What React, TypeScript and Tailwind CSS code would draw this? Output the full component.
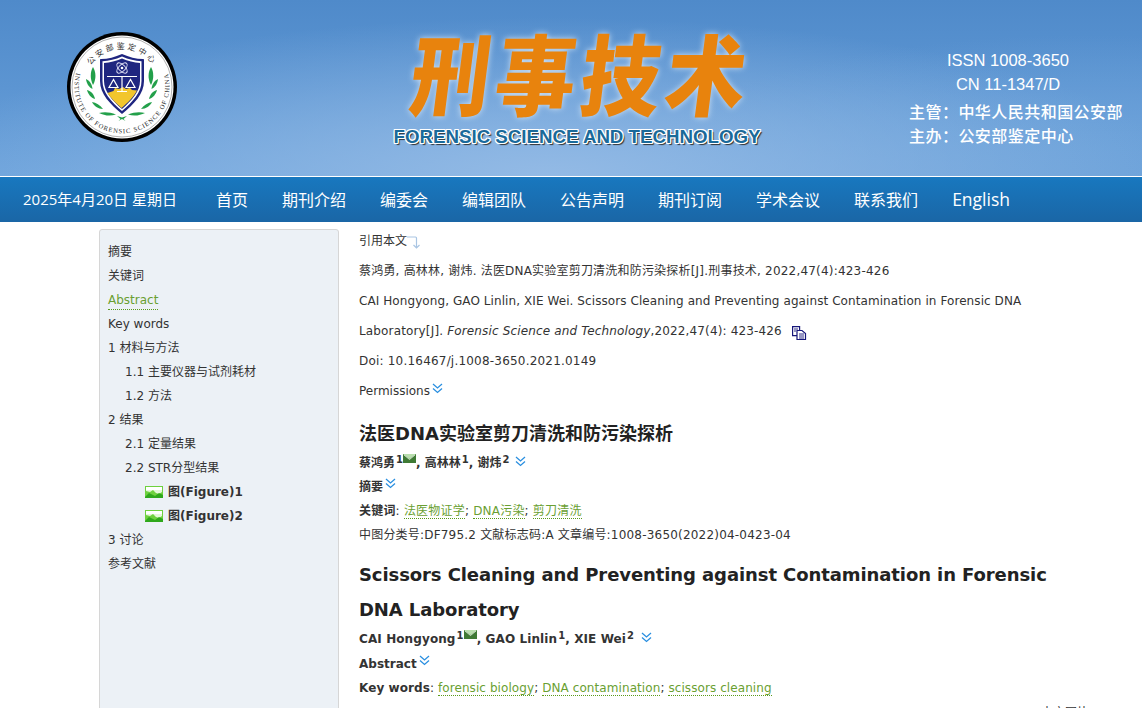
import { type ReactNode } from "react";

const body = "font-['DejaVu_Sans','Noto_Sans_CJK_SC',sans-serif]";
const nav = ["首页", "期刊介绍", "编委会", "编辑团队", "公告声明", "期刊订阅", "学术会议", "联系我们"];

const Logo = () => (
  <svg width="110" height="110" viewBox="0 0 110 110" className="shrink-0">
    <defs>
      <path id="topArc" d="M17 55a38 38 0 0 1 76 0" />
      <path id="botArc" d="M9 42A47.500 47.500 0 1 0 101 42" />
    </defs>
    <circle cx="55" cy="55" r="55" fill="#000" />
    <circle cx="55" cy="55" r="51.500" fill="#fff" />
    <circle cx="55" cy="55" r="50" fill="none" stroke="#666" strokeWidth="0.500" />
    <text fontSize="8" fill="#333" fontFamily="'Noto Sans CJK SC',sans-serif">
      <textPath href="#topArc" startOffset="50%" textAnchor="middle" letterSpacing="2.500">公安部鉴定中心</textPath>
    </text>
    <text fontSize="6.500" fill="#222" fontFamily="'Liberation Serif',serif">
      <textPath href="#botArc" startOffset="50%" textAnchor="middle" letterSpacing="1">INSTITUTE OF FORENSIC SCIENCE OF CHINA</textPath>
    </text>
    {/* shield */}
    <path d="M55 22c7 3 14 5 21 5 .6 0 1 .4 1 1v21c0 13-10 23-22 33-12-10-22-20-22-33V28c0-.6.4-1 1-1 7 0 14-2 21-5z" fill="#1f2680" />
    <path d="M55 24.500c6.500 2.800 13 4.500 19.500 4.700V49c0 11.500-8.500 20.500-19.500 30C44 69.500 35.500 60.500 35.500 49V29.200C42 29 48.500 27.300 55 24.500z" fill="#fff" />
    <path d="M55 26.500c6 2.600 12 4.200 18 4.500V49c0 10.500-8 19-18 28-10-9-18-17.500-18-28V31c6-.3 12-1.900 18-4.500z" fill="#1f2680" />
    <path d="M40.500 61l6-2 1.500-3 4 1 4-2 3 2 4-1 2 2 5 .5c-3 6-9 12-15.500 17.500-5-4.500-11-10-14.500-15.500z" fill="#f2c62d" />
    <g fill="none" stroke="#e0e0f5" strokeWidth="1">
      <ellipse cx="55" cy="36" rx="6.500" ry="3.200" transform="rotate(45 55 36)" />
      <ellipse cx="55" cy="36" rx="6.500" ry="3.200" transform="rotate(-45 55 36)" />
    </g>
    <circle cx="55" cy="36" r="1.300" fill="#fff" />
    <g fill="none" stroke="#fff" strokeWidth="1.200">
      <path d="M40 44.500h30M55 44.500V60M50 59.500h10" />
      <path d="M46.500 47.500l-4.500 8h9zM63.500 47.500l-4.500 8h9z" />
    </g>
    {/* wreath, left side drawn then mirrored */}
    <g fill="#23a04a">
      <g>
        <path d="M26 35c3 5 3.500 12 0 18-3-6-3-13 0-18z" />
        <path d="M19 47c3.500 1.500 6 5 6.500 10-3.500-1.500-6-5.500-6.500-10z" />
        <path d="M20 58c4 1 7 4 8 9-4-1-7-5-8-9z" />
        <path d="M25 70c4 .5 8 3 11 7-5 0-9-3-11-7z" />
        <path d="M32 81c5-1.500 11-1 17 1.500-6 2-12 1-17-1.500z" />
      </g>
      <g transform="translate(110 0) scale(-1 1)">
        <path d="M26 35c3 5 3.500 12 0 18-3-6-3-13 0-18z" />
        <path d="M19 47c3.500 1.500 6 5 6.500 10-3.500-1.500-6-5.500-6.500-10z" />
        <path d="M20 58c4 1 7 4 8 9-4-1-7-5-8-9z" />
        <path d="M25 70c4 .5 8 3 11 7-5 0-9-3-11-7z" />
        <path d="M32 81c5-1.500 11-1 17 1.500-6 2-12 1-17-1.500z" />
      </g>
      <path d="M50 84l5 1.500 5-1.500-3.500 3 2 2-3.500-2-3.500 2 2-2z" />
    </g>
  </svg>
);

const Chevrons = ({ className = "" }: { className?: string }) => (
  <svg width="11" height="11" viewBox="0 0 11 11" fill="none" stroke="#2a8fe0" strokeWidth="1.300" className={className}>
    <path d="M1 1l4.500 4 4.500-4M1 5.500l4.500 4 4.500-4" />
  </svg>
);

const Mail = () => (
  <svg width="13" height="9" viewBox="0 0 13 9" className="inline-block align-[4px]">
    <rect width="13" height="9" fill="#3f7a35" />
    <path d="M0 0l6.500 5L13 0z" fill="#b9dfae" />
    <path d="M1 1l5.500 4.500L12 1" fill="none" stroke="#fff" strokeWidth="0.700" />
  </svg>
);

const Pic = () => (
  <svg width="18" height="12" viewBox="0 0 18 12" className="shrink-0">
    <rect width="18" height="12" fill="#6ed13f" />
    <rect x="1" y="1" width="16" height="3" fill="#fff" />
    <path d="M1 4h16v2l-3 2-3-1-3-3-3 2-4-1z" fill="#e4f8d8" />
    <path d="M0 11l4-4 4 2 2 1 4-3 4 2v3H0z" fill="#2fa81c" />
  </svg>
);

const Link = ({ children }: { children: ReactNode }) => (
  <span className="text-[#6a9f32] border-b border-dotted border-[#5a9a1a]">{children}</span>
);

const Sup = ({ children }: { children: ReactNode }) => (
  <sup className="text-[10px] top-[-4px] ml-px">{children}</sup>
);

const Toc = ({ level = 0, children, bold }: { level?: number; children: ReactNode; bold?: boolean }) => (
  <div
    className={`h-6 flex items-center gap-[5px] ${level === 1 ? "pl-[17px]" : level === 2 ? "pl-[37px]" : ""} ${bold ? "font-bold" : ""}`}
  >
    {children}
  </div>
);

export default function App() {
  return (
    <div className={`h-[708px] overflow-hidden bg-white text-[12px] text-[#333] ${body}`}>
      <header className="h-[176px] flex items-center bg-[radial-gradient(ellipse_55%_90%_at_48%_100%,#93bae5,transparent),radial-gradient(ellipse_40%_80%_at_95%_100%,#6ea3da,transparent),linear-gradient(180deg,#4f8aca_0%,#5c95d2_50%,#6ea4dc_100%)]">
        <div className="ml-[67px] mt-[-2px]">
          <Logo />
        </div>
        <div className="ml-[215px] mt-[-1px] flex flex-col items-center w-[370px]">
          <div className="ml-[10px] font-['Noto_Sans_CJK_SC',sans-serif] font-black text-[#e8830d] text-[80px] leading-[88px] tracking-[5px] whitespace-nowrap skew-x-[-8deg] scale-y-110 [text-shadow:0_0_6px_#cfe2f5]">
            刑事技术
          </div>
          <div className="font-['Liberation_Sans',sans-serif] font-bold text-[18.700px] leading-6 mt-[11px] whitespace-nowrap text-[#1a6a9a] [text-shadow:-1px_-1px_0_#fff,1px_-1px_0_#fff,-1px_1px_0_#fff,1px_1px_0_#fff,0_-1px_0_#fff,0_1px_0_#fff,-1px_0_0_#fff,1px_0_0_#fff,2px_2px_1px_#333]">
            FORENSIC SCIENCE AND TECHNOLOGY
          </div>
        </div>
        <div className="ml-[147px] w-[198px] mt-[20px] text-white font-['Liberation_Sans','Noto_Sans_CJK_SC',sans-serif] text-[16.500px] leading-6">
          <div className="text-center">ISSN 1008-3650</div>
          <div className="text-center">CN 11-1347/D</div>
          <div className="mt-[5px] font-medium text-[16px] tracking-[0.460px] whitespace-nowrap">主管：中华人民共和国公安部</div>
          <div className="font-medium text-[16px] tracking-[0.460px] whitespace-nowrap">主办：公安部鉴定中心</div>
        </div>
      </header>
      <nav className="mt-px h-[45px] flex items-center bg-gradient-to-b from-[#1878bf] to-[#1a66a6] text-white pl-[23px] font-['Open_Sans','Noto_Sans_CJK_SC',sans-serif]">
        <span className="w-[193px] text-[15px] whitespace-nowrap">2025年4月20日 星期日</span>
        <div className="flex items-center gap-[34px] text-[16px]">
          {nav.map((item) => (
            <span key={item} className="whitespace-nowrap">{item}</span>
          ))}
          <span className="text-[17.500px]">English</span>
        </div>
      </nav>
      <div className="flex pl-[99px] pt-[7px] gap-5">
        <aside className="w-[240px] h-[600px] shrink-0 bg-[#ecf1f6] border border-[#d6d6d6] rounded-t-[3px] pt-[10px] px-2">
          <Toc>摘要</Toc>
          <Toc>关键词</Toc>
          <Toc>
            <Link>Abstract</Link>
          </Toc>
          <Toc>Key words</Toc>
          <Toc>1 材料与方法</Toc>
          <Toc level={1}>1.1 主要仪器与试剂耗材</Toc>
          <Toc level={1}>1.2 方法</Toc>
          <Toc>2 结果</Toc>
          <Toc level={1}>2.1 定量结果</Toc>
          <Toc level={1}>2.2 STR分型结果</Toc>
          <Toc level={2} bold>
            <Pic />
            图(Figure)1
          </Toc>
          <Toc level={2} bold>
            <Pic />
            图(Figure)2
          </Toc>
          <Toc>3 讨论</Toc>
          <Toc>参考文献</Toc>
        </aside>
        <main className="w-[700px] shrink-0 leading-[30px]">
          <div className="h-6 flex items-center">
            引用本文
            <svg width="14" height="14" viewBox="0 0 14 14" fill="none" stroke="#a9c5e3" strokeWidth="1.200" className="mt-1">
              <path d="M0 1h8.500a1 1 0 0 1 1 1v10M6.500 9l3 3 3-3" />
            </svg>
          </div>
          <div className="mt-[3px] tracking-[0.200px] whitespace-nowrap">蔡鸿勇, 高林林, 谢炜. 法医DNA实验室剪刀清洗和防污染探析[J].刑事技术, 2022,47(4):423-426</div>
          <div className="tracking-[0.080px] whitespace-nowrap">CAI Hongyong, GAO Linlin, XIE Wei. Scissors Cleaning and Preventing against Contamination in Forensic DNA</div>
          <div className="flex items-center tracking-[0.150px]">
            <span>
              Laboratory[J]. <i>Forensic Science and Technology</i>,2022,47(4): 423-426
            </span>
            <svg width="15" height="14" viewBox="0 0 15 14" fill="#fff" stroke="#16167a" strokeWidth="1.200" className="ml-[10px] mt-[3px]">
              <path d="M.6.6h7v9h-7z" />
              <path d="M5 4.500h5l3.500 3v6H5z" />
              <path d="M2 3h4M2 5h2M7 8h5M7 10h5M7 12h5" strokeWidth="0.900" />
            </svg>
          </div>
          <div className="tracking-[0.200px]">Doi: 10.16467/j.1008-3650.2021.0149</div>
          <div className="flex">
            Permissions
            <Chevrons className="mt-[7px] ml-[2px]" />
          </div>
          <h1 className="mt-[14px] text-[18px] font-bold leading-[28px] text-[#222]">法医DNA实验室剪刀清洗和防污染探析</h1>
          <div className="font-bold leading-6 mt-[3px] flex items-center">
            <span>
              蔡鸿勇<Sup>1</Sup>
              <Mail />, 高林林<Sup>1</Sup>, 谢炜<Sup>2</Sup>
            </span>
            <Chevrons className="ml-[6px] mb-[4px]" />
          </div>
          <div className="font-bold leading-6 flex">
            摘要
            <Chevrons className="ml-[2px] mt-[3px]" />
          </div>
          <div className="leading-6 tracking-[0.200px]">
            <b>关键词</b>: <Link>法医物证学</Link>; <Link>DNA污染</Link>; <Link>剪刀清洗</Link>
          </div>
          <div className="leading-6 tracking-[0.200px]">中图分类号:DF795.2 文献标志码:A 文章编号:1008-3650(2022)04-0423-04</div>
          <h2 className="mt-[10px] text-[18px] font-bold leading-[35px] text-[#222] tracking-[-0.090px]">
            Scissors Cleaning and Preventing against Contamination in Forensic DNA Laboratory
          </h2>
          <div className="font-bold leading-6 flex items-center tracking-[0.100px]">
            <span>
              CAI Hongyong<Sup>1</Sup>
              <Mail />, GAO Linlin<Sup>1</Sup>, XIE Wei<Sup>2</Sup>
            </span>
            <Chevrons className="ml-[7px] mb-[4px]" />
          </div>
          <div className="font-bold leading-6 flex mt-px">
            Abstract
            <Chevrons className="ml-[2px] mt-[3px]" />
          </div>
          <div className="leading-6 tracking-[0.080px]">
            <b>Key words</b>: <Link>forensic biology</Link>; <Link>DNA contamination</Link>; <Link>scissors cleaning</Link>
          </div>
          <div className="leading-6 mt-px pl-[682px] whitespace-nowrap">本文图片</div>
        </main>
      </div>
    </div>
  );
}
